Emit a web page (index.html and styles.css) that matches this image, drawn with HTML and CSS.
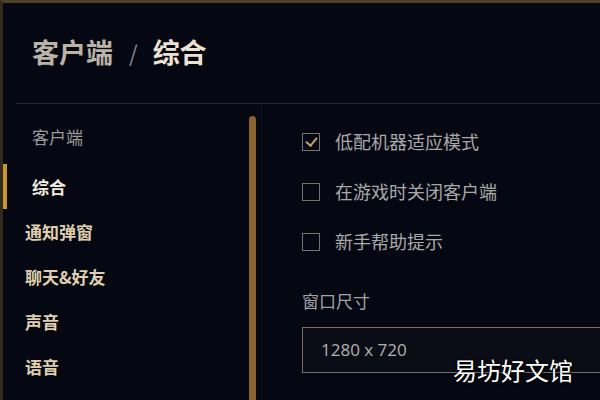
FILE: index.html
```html
<!doctype html>
<html lang="zh-CN">
<head>
    <meta charset="utf-8">
    <title>客户端 / 综合</title>
    <link rel="stylesheet" href="styles.css">
</head>
<body>
<div class="frame">
    <div class="header">
        <h1 class="title"><span class="crumb">客户端</span><span class="slash">/</span><span class="page">综合</span></h1>
    </div>
    <div class="main">
        <ul class="nav">
            <li class="group">客户端</li>
            <li class="item current">综合</li>
            <li class="item">通知弹窗</li>
            <li class="item">聊天&amp;好友</li>
            <li class="item">声音</li>
            <li class="item">语音</li>
        </ul>
        <div class="scroll"></div>
        <div class="content">
            <label class="option"><span class="box checked"></span>低配机器适应模式</label>
            <label class="option"><span class="box"></span>在游戏时关闭客户端</label>
            <label class="option"><span class="box"></span>新手帮助提示</label>
            <div class="field-label">窗口尺寸</div>
            <div class="select">1280 x 720</div>
        </div>
    </div>
    <div class="watermark">易坊好文馆</div>
</div>
</body>
</html>
```
FILE: styles.css
```css
body, ul, li, h1 {
    margin: 0;
    padding: 0;
    list-style: none;
}

body {
    background: #050812;
    font-family: "Noto Sans CJK SC", "Noto Sans", sans-serif;
    width: 600px;
    height: 400px;
    overflow: hidden;
}

.frame {
    position: relative;
    height: 397px;
    border-top: 3px solid #4f4124;
    border-left: 3px solid #322b1b;
    overflow: hidden;
}

.header {
    height: 100px;
    padding-left: 29px;
    display: flex;
    align-items: center;
}

.title {
    font-size: 27px;
    font-weight: 700;
    line-height: 1;
    display: flex;
    align-items: center;
    margin-top: -3px;
}

.title .crumb {
    color: #bab3a6;
}

.title .slash {
    color: #8b8b8f;
    font-weight: 400;
    font-size: 22px;
    margin: 0 15px 0 16px;
}

.title .page {
    color: #ece3d2;
}

.main {
    border-top: 1px solid #232735;
    margin-left: 13px;
    display: flex;
    height: 296px;
}

.nav {
    flex: none;
    width: 246px;
    margin-left: -13px;
    padding-top: 10px;
}

.nav li {
    height: 45px;
    line-height: 45px;
    font-size: 17px;
}

.nav .group {
    color: #9b9a9a;
    padding-left: 29px;
    margin-bottom: 5px;
}

.nav .item {
    color: #dfcfae;
    font-weight: 700;
    padding-left: 22px;
}

.nav .item.current {
    color: #f3ebdd;
    border-left: 4px solid #c6962f;
    padding-left: 25px;
}

.scroll {
    flex: none;
    width: 7px;
    margin-top: 12px;
    background: #8a6331;
    border-radius: 4px 4px 0 0;
}

.content {
    flex: 1;
    min-width: 0;
    overflow: hidden;
    border-left: 1px solid #0d111c;
    margin-left: 5px;
    padding: 12px 0 0 40px;
}

.option {
    height: 50px;
    display: flex;
    align-items: center;
    font-size: 18px;
    color: #a9a9a7;
}

.box {
    flex: none;
    width: 16px;
    height: 16px;
    border: 1.5px solid #77716a;
    margin-right: 15px;
    position: relative;
    top: 1px;
}

.box.checked::after {
    content: "";
    position: absolute;
    left: 5px;
    top: 1px;
    width: 5px;
    height: 9px;
    border-right: 2px solid #c9a36c;
    border-bottom: 2px solid #c9a36c;
    transform: rotate(40deg);
}

.field-label {
    margin-top: 23px;
    font-size: 17px;
    line-height: 24px;
    color: #a3a3a3;
}

.select {
    margin-top: 14px;
    margin-right: -20px;
    height: 44px;
    line-height: 44px;
    border: 1.5px solid #7b705f;
    border-right: none;
    background: #0b0d16;
    padding-left: 18px;
    font-family: "Open Sans", sans-serif;
    font-size: 17px;
    color: #b3b1ad;
}

.watermark {
    position: absolute;
    left: 450px;
    top: 349px;
    font-size: 24px;
    color: #ffffff;
    text-shadow: 0 0 3px #000, 1px 1px 2px #000;
}
```
